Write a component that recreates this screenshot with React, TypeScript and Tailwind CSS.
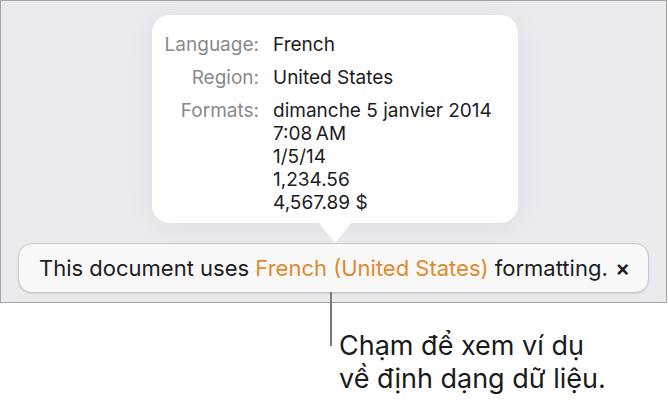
export default function App() {
  const formats = ["dimanche 5 janvier 2014", "7:08\u2009AM", "1/5/14", "1,234.56", "4,567.89 $"];

  return (
    <div className="w-[668px] h-[402px] bg-white font-['Inter',sans-serif] overflow-hidden">
      {/* Settings panel */}
      <div className="w-[667px] h-[303px] border border-[#a3a3a6] bg-[#ebebef] flex flex-col pt-[14px]">
        {/* Popover */}
        <div className="ml-[151px] w-[366px] flex flex-col items-center">
          <div className="w-full h-[208px] bg-white rounded-[18px] shadow-[0_4px_30px_rgba(0,0,0,0.06)] pt-[18px] text-[19px] leading-[23px]">
            <div className="grid grid-cols-[107px_1fr] gap-x-[14px] gap-y-[10px]">
              <span className="text-right text-[#8a8a8e]">Language:</span>
              <span className="text-[#1c1c1e]">French</span>
              <span className="text-right text-[#8a8a8e]">Region:</span>
              <span className="text-[#1c1c1e]">United States</span>
              <span className="text-right text-[#8a8a8e]">Formats:</span>
              <div className="flex flex-col text-[#1c1c1e]">
                {formats.map((f) => (
                  <span key={f}>{f}</span>
                ))}
              </div>
            </div>
          </div>
          <svg width="34" height="21" viewBox="0 0 34 21" className="-mt-px">
            <path d="M0 0 L34 0 L18 20 Q17 21 16 20 Z" fill="#ffffff" />
          </svg>
        </div>

        {/* Format banner */}
        <div className="mx-[17px] h-[50px] rounded-[14px] bg-[#f8f8f8] border border-[#c9c9cc] shadow-[0_1px_2px_rgba(0,0,0,0.12)] flex items-center pl-[20px] pr-[18px] text-[22px] text-[#1c1c1e]">
          <span className="flex-1 whitespace-nowrap">
            This document uses <span className="text-[#e08a2f]">French (United States)</span> formatting.
          </span>
          <span className="text-[22px] font-semibold leading-none">×</span>
        </div>
      </div>

      {/* Callout */}
      <div className="ml-[330px] flex">
        <div className="w-[2px] h-[54px] bg-[#7a7a7a] -mt-[11px]" />
        <p className="ml-[7px] mt-[26px] text-[27px] leading-[33px] text-[#1a1a1a]">
          Chạm để xem ví dụ
          <br />
          về định dạng dữ liệu.
        </p>
      </div>
    </div>
  );
}
